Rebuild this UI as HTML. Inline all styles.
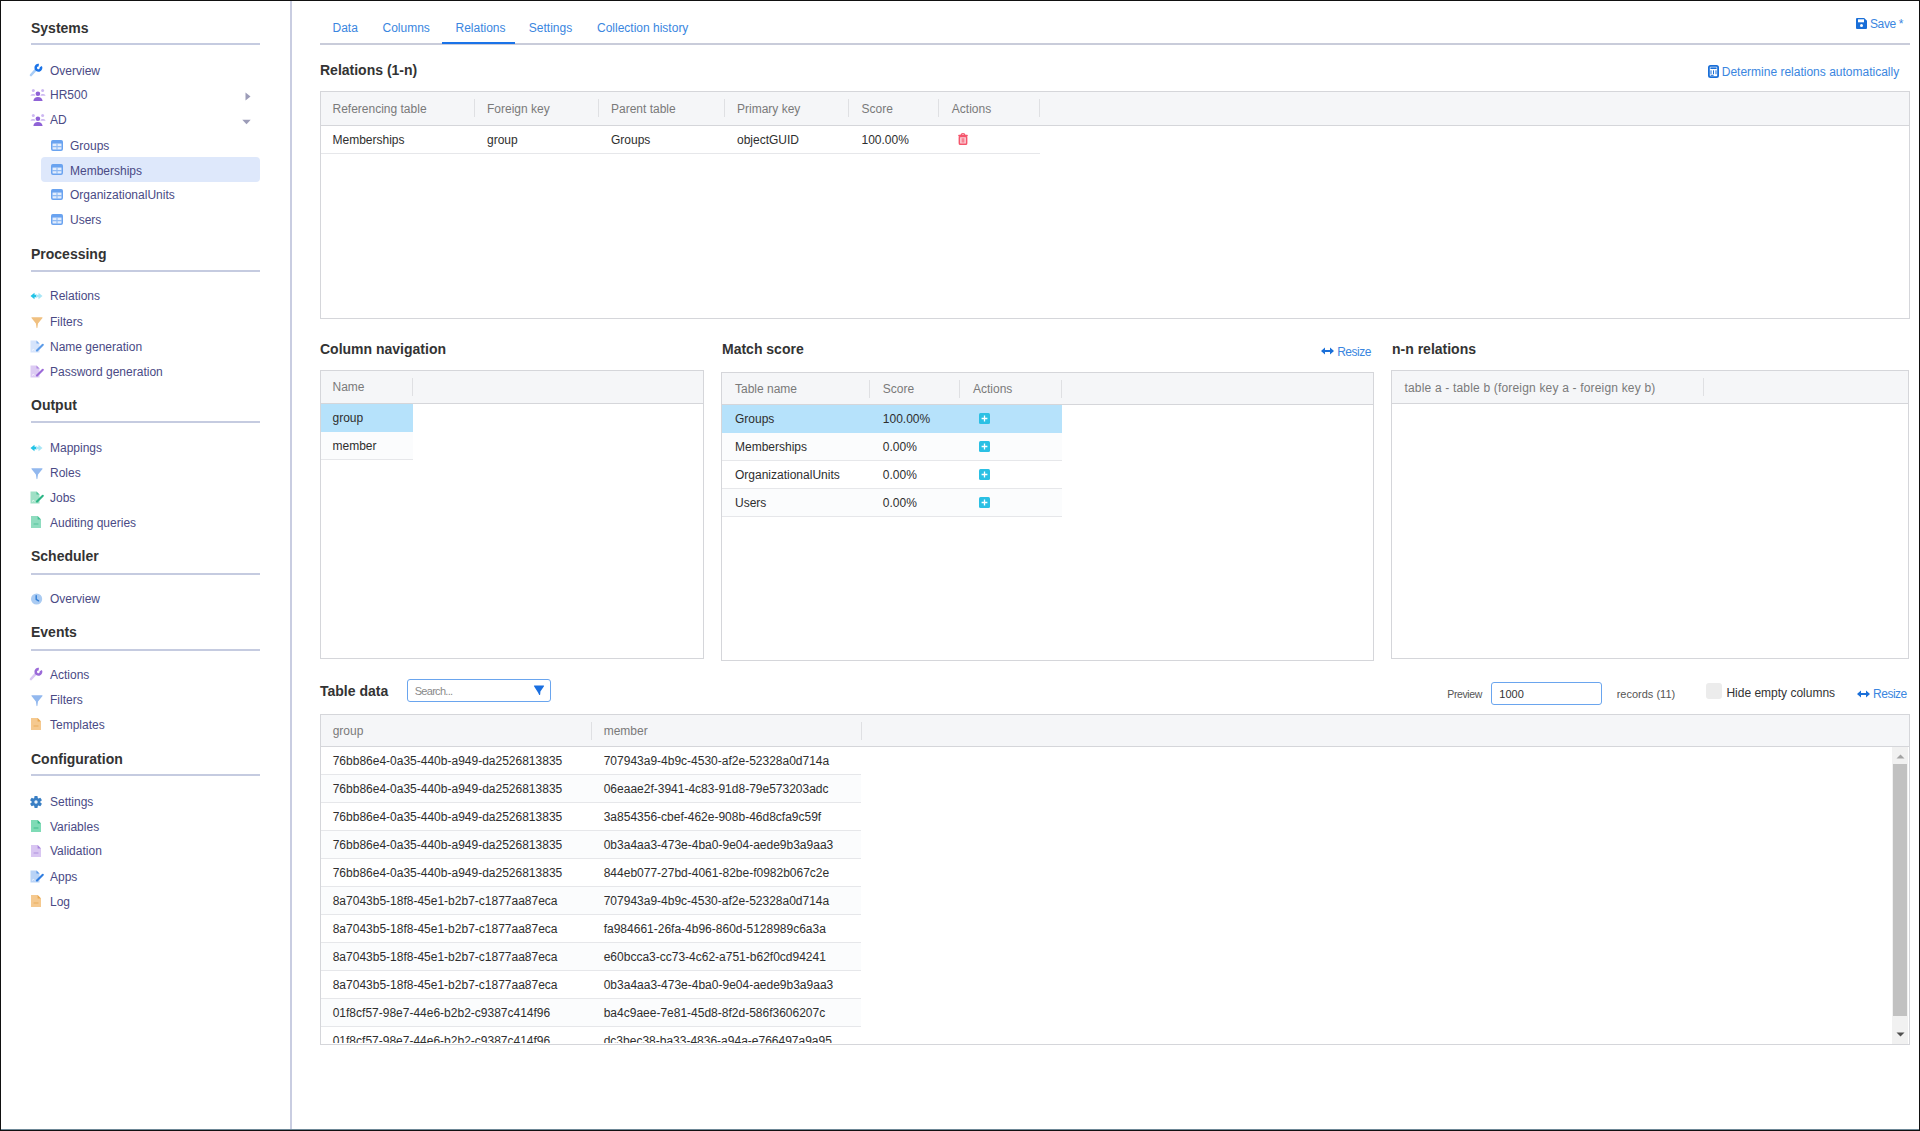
<!DOCTYPE html>
<html><head><meta charset="utf-8"><title>Relations</title>
<style>
html,body{margin:0;padding:0;background:#fff;width:1920px;height:1131px;overflow:hidden;}
body{position:relative;font-family:"Liberation Sans", sans-serif;}
.t{position:absolute;white-space:nowrap;}
.r{position:absolute;}
</style></head><body>
<div class="r" style="left:0px;top:0px;width:1920px;height:1px;background:#111;"></div>
<div class="r" style="left:0px;top:0px;width:1px;height:1131px;background:#111;"></div>
<div class="r" style="left:1919px;top:0px;width:1px;height:1131px;background:#111;"></div>
<div class="r" style="left:0px;top:1130px;width:1920px;height:1px;background:#111;"></div>
<div class="r" style="left:290px;top:1px;width:2px;height:1128px;background:#c9cde1;"></div>
<div class="r" style="left:1px;top:1129px;width:1918px;height:1px;background:#6d8796;"></div>
<div class="t" style="left:31.00px;top:19px;font-size:14px;line-height:18px;color:#333333;font-weight:bold;">Systems</div>
<div class="r" style="left:31px;top:43px;width:229px;height:2px;background:#c5cbe0;"></div>
<div class="t" style="left:50.00px;top:64px;font-size:12px;line-height:15px;color:#4a4a85;">Overview</div>
<svg class="r" style="left:29px;top:62px" width="15" height="15" viewBox="0 0 15 15"><path d="M2 13 L6.9 7.6" stroke="#a9cdf6" stroke-width="2.6" stroke-linecap="round"/><path d="M9.78 3.13 A2.7 2.7 0 1 0 11.78 4.53" stroke="#1a73e8" stroke-width="2.6" fill="none"/></svg>
<div class="t" style="left:50.00px;top:88px;font-size:12px;line-height:15px;color:#4a4a85;">HR500</div>
<svg class="r" style="left:30px;top:88px" width="16" height="14" viewBox="0 0 16 14"><circle cx="7.9" cy="5.8" r="2.3" fill="#8f62d6"/><path d="M3.4 13 Q3.8 9 7.9 9 Q12 9 12.6 13 Z" fill="#8f62d6"/><circle cx="3.3" cy="2.6" r="1.5" fill="#cdb8f2"/><circle cx="12.6" cy="2.6" r="1.5" fill="#cdb8f2"/><path d="M0.4 7.7 Q0.9 5.9 2.6 5.9 H4 Q5.2 5.9 5.4 7.7 Z" fill="#cdb8f2"/><path d="M10.4 7.7 Q10.7 5.9 12 5.9 H13.4 Q15.1 5.9 15.6 7.7 Z" fill="#cdb8f2"/></svg>
<svg class="r" style="left:245px;top:92px" width="6" height="9" viewBox="0 0 6 9"><path d="M0.5 0.5 L5.5 4.5 L0.5 8.5 Z" fill="#9c9cb8"/></svg>
<div class="t" style="left:50.00px;top:113px;font-size:12px;line-height:15px;color:#4a4a85;">AD</div>
<svg class="r" style="left:30px;top:113px" width="16" height="14" viewBox="0 0 16 14"><circle cx="7.9" cy="5.8" r="2.3" fill="#8f62d6"/><path d="M3.4 13 Q3.8 9 7.9 9 Q12 9 12.6 13 Z" fill="#8f62d6"/><circle cx="3.3" cy="2.6" r="1.5" fill="#cdb8f2"/><circle cx="12.6" cy="2.6" r="1.5" fill="#cdb8f2"/><path d="M0.4 7.7 Q0.9 5.9 2.6 5.9 H4 Q5.2 5.9 5.4 7.7 Z" fill="#cdb8f2"/><path d="M10.4 7.7 Q10.7 5.9 12 5.9 H13.4 Q15.1 5.9 15.6 7.7 Z" fill="#cdb8f2"/></svg>
<svg class="r" style="left:242px;top:119px" width="9" height="6" viewBox="0 0 9 6"><path d="M0.3 0.8 H8.7 L4.5 5.2 Z" fill="#9c9cb8"/></svg>
<div class="r" style="left:41px;top:157px;width:219px;height:25px;background:#dee8fb;border-radius:4px;"></div>
<div class="t" style="left:70.00px;top:139px;font-size:12px;line-height:15px;color:#4a4a85;">Groups</div>
<svg class="r" style="left:51px;top:140px" width="12" height="11" viewBox="0 0 12 11"><rect x="0.75" y="0.75" width="10.5" height="9.5" rx="1.2" fill="#e3edfd" stroke="#6aa3f0" stroke-width="1.5"/><rect x="0.75" y="0.75" width="10.5" height="2.8" fill="#6aa3f0"/><path d="M1 6.6 H11 M6 3.4 V10" stroke="#8fbaf3" stroke-width="1.1"/></svg>
<div class="t" style="left:70.00px;top:164px;font-size:12px;line-height:15px;color:#4a4a85;">Memberships</div>
<svg class="r" style="left:51px;top:164px" width="12" height="11" viewBox="0 0 12 11"><rect x="0.75" y="0.75" width="10.5" height="9.5" rx="1.2" fill="#e3edfd" stroke="#6aa3f0" stroke-width="1.5"/><rect x="0.75" y="0.75" width="10.5" height="2.8" fill="#6aa3f0"/><path d="M1 6.6 H11 M6 3.4 V10" stroke="#8fbaf3" stroke-width="1.1"/></svg>
<div class="t" style="left:70.00px;top:188px;font-size:12px;line-height:15px;color:#4a4a85;">OrganizationalUnits</div>
<svg class="r" style="left:51px;top:189px" width="12" height="11" viewBox="0 0 12 11"><rect x="0.75" y="0.75" width="10.5" height="9.5" rx="1.2" fill="#e3edfd" stroke="#6aa3f0" stroke-width="1.5"/><rect x="0.75" y="0.75" width="10.5" height="2.8" fill="#6aa3f0"/><path d="M1 6.6 H11 M6 3.4 V10" stroke="#8fbaf3" stroke-width="1.1"/></svg>
<div class="t" style="left:70.00px;top:213px;font-size:12px;line-height:15px;color:#4a4a85;">Users</div>
<svg class="r" style="left:51px;top:214px" width="12" height="11" viewBox="0 0 12 11"><rect x="0.75" y="0.75" width="10.5" height="9.5" rx="1.2" fill="#e3edfd" stroke="#6aa3f0" stroke-width="1.5"/><rect x="0.75" y="0.75" width="10.5" height="2.8" fill="#6aa3f0"/><path d="M1 6.6 H11 M6 3.4 V10" stroke="#8fbaf3" stroke-width="1.1"/></svg>
<div class="t" style="left:31.00px;top:245px;font-size:14px;line-height:18px;color:#333333;font-weight:bold;">Processing</div>
<div class="r" style="left:31px;top:270px;width:229px;height:2px;background:#c5cbe0;"></div>
<div class="t" style="left:50.00px;top:289px;font-size:12px;line-height:15px;color:#4a4a85;">Relations</div>
<svg class="r" style="left:30px;top:292px" width="13" height="8" viewBox="0 0 13 8"><path d="M0.5 4 L4.5 0.8 V2.8 H7 V5.2 H4.5 V7.2 Z" fill="#22c3e6"/><path d="M12.5 4 L8.5 0.8 V7.2 Z" fill="#a8e6f6"/><rect x="6" y="2.8" width="3" height="2.4" fill="#a8e6f6"/></svg>
<div class="t" style="left:50.00px;top:315px;font-size:12px;line-height:15px;color:#4a4a85;">Filters</div>
<svg class="r" style="left:31px;top:317px" width="12" height="12" viewBox="0 0 12 12"><path d="M0.3 0.8 Q0.3 0.3 0.9 0.3 H11.1 Q11.7 0.3 11.5 0.9 L7 6.6 L6.4 10.8 Q6 11.6 5.5 10.8 L4.9 6.6 Z" fill="#f0c080"/></svg>
<div class="t" style="left:50.00px;top:340px;font-size:12px;line-height:15px;color:#4a4a85;">Name generation</div>
<svg class="r" style="left:30px;top:340px" width="15" height="13" viewBox="0 0 15 13"><path d="M0.5 0.5 H6.5 L9.5 3.5 V12.5 H0.5 Z" fill="#d6e4fb"/><path d="M6.5 0.5 L9.5 3.5 H6.5 Z" fill="#5b9be8" opacity="0.7"/><path d="M2 10.5 Q3.2 8.6 4.6 10.2" stroke="#fff" stroke-width="1" fill="none" opacity="0.8"/><path d="M7 10.6 L12.8 4.8" stroke="#5b9be8" stroke-width="2.1" stroke-linecap="round"/></svg>
<div class="t" style="left:50.00px;top:365px;font-size:12px;line-height:15px;color:#4a4a85;">Password generation</div>
<svg class="r" style="left:30px;top:365px" width="15" height="13" viewBox="0 0 15 13"><path d="M0.5 0.5 H6.5 L9.5 3.5 V12.5 H0.5 Z" fill="#dccbf3"/><path d="M6.5 0.5 L9.5 3.5 H6.5 Z" fill="#9b6ad8" opacity="0.7"/><path d="M2 10.5 Q3.2 8.6 4.6 10.2" stroke="#fff" stroke-width="1" fill="none" opacity="0.8"/><path d="M7 10.6 L12.8 4.8" stroke="#9b6ad8" stroke-width="2.1" stroke-linecap="round"/></svg>
<div class="t" style="left:31.00px;top:396px;font-size:14px;line-height:18px;color:#333333;font-weight:bold;">Output</div>
<div class="r" style="left:31px;top:421px;width:229px;height:2px;background:#c5cbe0;"></div>
<div class="t" style="left:50.00px;top:441px;font-size:12px;line-height:15px;color:#4a4a85;">Mappings</div>
<svg class="r" style="left:30px;top:443.5px" width="13" height="8" viewBox="0 0 13 8"><path d="M0.5 4 L4.5 0.8 V2.8 H7 V5.2 H4.5 V7.2 Z" fill="#22c3e6"/><path d="M12.5 4 L8.5 0.8 V7.2 Z" fill="#a8e6f6"/><rect x="6" y="2.8" width="3" height="2.4" fill="#a8e6f6"/></svg>
<div class="t" style="left:50.00px;top:466px;font-size:12px;line-height:15px;color:#4a4a85;">Roles</div>
<svg class="r" style="left:31px;top:467.5px" width="12" height="12" viewBox="0 0 12 12"><path d="M0.3 0.8 Q0.3 0.3 0.9 0.3 H11.1 Q11.7 0.3 11.5 0.9 L7 6.6 L6.4 10.8 Q6 11.6 5.5 10.8 L4.9 6.6 Z" fill="#92b8ee"/></svg>
<div class="t" style="left:50.00px;top:491px;font-size:12px;line-height:15px;color:#4a4a85;">Jobs</div>
<svg class="r" style="left:30px;top:490.5px" width="15" height="13" viewBox="0 0 15 13"><path d="M0.5 0.5 H6.5 L9.5 3.5 V12.5 H0.5 Z" fill="#9fe0c6"/><path d="M6.5 0.5 L9.5 3.5 H6.5 Z" fill="#2bb585" opacity="0.7"/><path d="M2 10.5 Q3.2 8.6 4.6 10.2" stroke="#fff" stroke-width="1" fill="none" opacity="0.8"/><path d="M7 10.6 L12.8 4.8" stroke="#2bb585" stroke-width="2.1" stroke-linecap="round"/></svg>
<div class="t" style="left:50.00px;top:516px;font-size:12px;line-height:15px;color:#4a4a85;">Auditing queries</div>
<svg class="r" style="left:31px;top:515.5px" width="10" height="12" viewBox="0 0 10 12"><path d="M0 0 H6.6 L10 3.4 V12 H0 Z" fill="#8fdcbf"/><path d="M6.6 0 L10 3.4 H6.6 Z" fill="#45c095"/><rect x="2.6" y="7.2" width="4.8" height="1.6" fill="#45c095" opacity="0.5"/></svg>
<div class="t" style="left:31.00px;top:547px;font-size:14px;line-height:18px;color:#333333;font-weight:bold;">Scheduler</div>
<div class="r" style="left:31px;top:573px;width:229px;height:2px;background:#c5cbe0;"></div>
<div class="t" style="left:50.00px;top:592px;font-size:12px;line-height:15px;color:#4a4a85;">Overview</div>
<svg class="r" style="left:31px;top:593px" width="12" height="12" viewBox="0 0 12 12"><circle cx="5.6" cy="6" r="5.6" fill="#aacbf2"/><path d="M5.2 2.6 V6.4 L7.6 7.8" stroke="#2f7dd6" stroke-width="1.4" fill="none" stroke-linecap="round" stroke-linejoin="round"/></svg>
<div class="t" style="left:31.00px;top:623px;font-size:14px;line-height:18px;color:#333333;font-weight:bold;">Events</div>
<div class="r" style="left:31px;top:649px;width:229px;height:2px;background:#c5cbe0;"></div>
<div class="t" style="left:50.00px;top:668px;font-size:12px;line-height:15px;color:#4a4a85;">Actions</div>
<svg class="r" style="left:29px;top:666px" width="15" height="15" viewBox="0 0 15 15"><path d="M2 13 L6.9 7.6" stroke="#d8c6f2" stroke-width="2.6" stroke-linecap="round"/><path d="M9.78 3.13 A2.7 2.7 0 1 0 11.78 4.53" stroke="#9b6ad8" stroke-width="2.6" fill="none"/></svg>
<div class="t" style="left:50.00px;top:693px;font-size:12px;line-height:15px;color:#4a4a85;">Filters</div>
<svg class="r" style="left:31px;top:694.5px" width="12" height="12" viewBox="0 0 12 12"><path d="M0.3 0.8 Q0.3 0.3 0.9 0.3 H11.1 Q11.7 0.3 11.5 0.9 L7 6.6 L6.4 10.8 Q6 11.6 5.5 10.8 L4.9 6.6 Z" fill="#92b8ee"/></svg>
<div class="t" style="left:50.00px;top:718px;font-size:12px;line-height:15px;color:#4a4a85;">Templates</div>
<svg class="r" style="left:31px;top:717.5px" width="10" height="12" viewBox="0 0 10 12"><path d="M0 0 H6.6 L10 3.4 V12 H0 Z" fill="#f5c98f"/><path d="M6.6 0 L10 3.4 H6.6 Z" fill="#e8a850"/><rect x="2.6" y="7.2" width="4.8" height="1.6" fill="#e8a850" opacity="0.5"/></svg>
<div class="t" style="left:31.00px;top:750px;font-size:14px;line-height:18px;color:#333333;font-weight:bold;">Configuration</div>
<div class="r" style="left:31px;top:774px;width:229px;height:2px;background:#c5cbe0;"></div>
<div class="t" style="left:50.00px;top:795px;font-size:12px;line-height:15px;color:#4a4a85;">Settings</div>
<svg class="r" style="left:30px;top:796px" width="12" height="12" viewBox="0 0 12 12"><g fill="#3a7fc4"><rect x="4.3" y="0" width="3.4" height="3.2" rx="0.8" transform="rotate(0 6 6)"/><rect x="4.3" y="0" width="3.4" height="3.2" rx="0.8" transform="rotate(60 6 6)"/><rect x="4.3" y="0" width="3.4" height="3.2" rx="0.8" transform="rotate(120 6 6)"/><rect x="4.3" y="0" width="3.4" height="3.2" rx="0.8" transform="rotate(180 6 6)"/><rect x="4.3" y="0" width="3.4" height="3.2" rx="0.8" transform="rotate(240 6 6)"/><rect x="4.3" y="0" width="3.4" height="3.2" rx="0.8" transform="rotate(300 6 6)"/><circle cx="6" cy="6" r="4.3"/></g><circle cx="6" cy="6" r="1.7" fill="#eaf2fb"/></svg>
<div class="t" style="left:50.00px;top:820px;font-size:12px;line-height:15px;color:#4a4a85;">Variables</div>
<svg class="r" style="left:31px;top:819.5px" width="10" height="12" viewBox="0 0 10 12"><path d="M0 0 H6.6 L10 3.4 V12 H0 Z" fill="#7fdbb6"/><path d="M6.6 0 L10 3.4 H6.6 Z" fill="#35b886"/><rect x="2.6" y="7.2" width="4.8" height="1.6" fill="#35b886" opacity="0.5"/></svg>
<div class="t" style="left:50.00px;top:844px;font-size:12px;line-height:15px;color:#4a4a85;">Validation</div>
<svg class="r" style="left:31px;top:844.5px" width="10" height="12" viewBox="0 0 10 12"><path d="M0 0 H6.6 L10 3.4 V12 H0 Z" fill="#d9c6f2"/><path d="M6.6 0 L10 3.4 H6.6 Z" fill="#a884dc"/><rect x="2.6" y="7.2" width="4.8" height="1.6" fill="#a884dc" opacity="0.5"/></svg>
<div class="t" style="left:50.00px;top:870px;font-size:12px;line-height:15px;color:#4a4a85;">Apps</div>
<svg class="r" style="left:30px;top:870px" width="15" height="13" viewBox="0 0 15 13"><path d="M0.5 0.5 H6.5 L9.5 3.5 V12.5 H0.5 Z" fill="#b9d3f6"/><path d="M6.5 0.5 L9.5 3.5 H6.5 Z" fill="#2f7de0" opacity="0.7"/><path d="M2 10.5 Q3.2 8.6 4.6 10.2" stroke="#fff" stroke-width="1" fill="none" opacity="0.8"/><path d="M7 10.6 L12.8 4.8" stroke="#2f7de0" stroke-width="2.1" stroke-linecap="round"/></svg>
<div class="t" style="left:50.00px;top:895px;font-size:12px;line-height:15px;color:#4a4a85;">Log</div>
<svg class="r" style="left:31px;top:895px" width="10" height="12" viewBox="0 0 10 12"><path d="M0 0 H6.6 L10 3.4 V12 H0 Z" fill="#f5c98f"/><path d="M6.6 0 L10 3.4 H6.6 Z" fill="#e8a850"/><rect x="2.6" y="7.2" width="4.8" height="1.6" fill="#e8a850" opacity="0.5"/></svg>
<div class="t" style="left:332.50px;top:21px;font-size:12px;line-height:15px;color:#3a86e0;">Data</div>
<div class="t" style="left:382.50px;top:21px;font-size:12px;line-height:15px;color:#3a86e0;">Columns</div>
<div class="t" style="left:455.50px;top:21px;font-size:12px;line-height:15px;color:#3a86e0;">Relations</div>
<div class="t" style="left:528.80px;top:21px;font-size:12px;line-height:15px;color:#3a86e0;">Settings</div>
<div class="t" style="left:597.00px;top:21px;font-size:12px;line-height:15px;color:#3a86e0;">Collection history</div>
<div class="r" style="left:320px;top:43px;width:1590px;height:2px;background:#c9ccda;"></div>
<div class="r" style="left:442px;top:42px;width:73px;height:2px;background:#1a73e8;"></div>
<svg class="r" style="left:1856px;top:18px" width="11" height="11" viewBox="0 0 11 11"><path d="M0 1 Q0 0 1 0 H8.2 L11 2.8 V10 Q11 11 10 11 H1 Q0 11 0 10 Z" fill="#1a6fd8"/><rect x="2" y="1.3" width="6" height="3" fill="#fff"/><circle cx="5.5" cy="7.4" r="1.5" fill="#fff"/></svg>
<div class="t" style="left:1870.00px;top:17px;font-size:12px;line-height:15px;color:#3a86e0;letter-spacing:-0.4px;">Save *</div>
<div class="t" style="left:320.00px;top:61px;font-size:14px;line-height:18px;color:#333333;font-weight:bold;">Relations (1-n)</div>
<svg class="r" style="left:1708px;top:65px" width="11" height="13" viewBox="0 0 11 13"><rect x="0.9" y="0.9" width="9.2" height="11.2" rx="1.6" fill="none" stroke="#1a6fd8" stroke-width="1.8"/><rect x="2.4" y="2.4" width="6.2" height="1.6" fill="#1a6fd8"/><path d="M3 5.3 V9.2 M5.5 5.3 V9.2 M8 5.3 V9.2" stroke="#1a6fd8" stroke-width="1"/><rect x="2.6" y="9.8" width="3" height="1" fill="#1a6fd8"/></svg>
<div class="t" style="left:1721.75px;top:65px;font-size:12px;line-height:15px;color:#3a86e0;">Determine relations automatically</div>
<div class="r" style="left:320px;top:91px;width:1590px;height:228px;border:1px solid #d5d6da;box-sizing:border-box;"></div>
<div class="r" style="left:321px;top:92px;width:1588px;height:33px;background:#f5f6f8;"></div>
<div class="r" style="left:321px;top:125px;width:1588px;height:1px;background:#d5d6da;"></div>
<div class="t" style="left:332.50px;top:102px;font-size:12px;line-height:15px;color:#7a7a7a;">Referencing table</div>
<div class="t" style="left:487.00px;top:102px;font-size:12px;line-height:15px;color:#7a7a7a;">Foreign key</div>
<div class="t" style="left:611.00px;top:102px;font-size:12px;line-height:15px;color:#7a7a7a;">Parent table</div>
<div class="t" style="left:737.00px;top:102px;font-size:12px;line-height:15px;color:#7a7a7a;">Primary key</div>
<div class="t" style="left:861.50px;top:102px;font-size:12px;line-height:15px;color:#7a7a7a;">Score</div>
<div class="t" style="left:951.80px;top:102px;font-size:12px;line-height:15px;color:#7a7a7a;">Actions</div>
<div class="r" style="left:474px;top:99px;width:1px;height:18px;background:#dfe0e3;"></div>
<div class="r" style="left:598px;top:99px;width:1px;height:18px;background:#dfe0e3;"></div>
<div class="r" style="left:724px;top:99px;width:1px;height:18px;background:#dfe0e3;"></div>
<div class="r" style="left:848px;top:99px;width:1px;height:18px;background:#dfe0e3;"></div>
<div class="r" style="left:938px;top:99px;width:1px;height:18px;background:#dfe0e3;"></div>
<div class="r" style="left:1039px;top:99px;width:1px;height:18px;background:#dfe0e3;"></div>
<div class="r" style="left:321px;top:153px;width:719px;height:1px;background:#e6e7ea;"></div>
<div class="t" style="left:332.50px;top:133px;font-size:12px;line-height:15px;color:#2e2e2e;">Memberships</div>
<div class="t" style="left:487.00px;top:133px;font-size:12px;line-height:15px;color:#2e2e2e;">group</div>
<div class="t" style="left:611.00px;top:133px;font-size:12px;line-height:15px;color:#2e2e2e;">Groups</div>
<div class="t" style="left:737.00px;top:133px;font-size:12px;line-height:15px;color:#2e2e2e;">objectGUID</div>
<div class="t" style="left:861.50px;top:133px;font-size:12px;line-height:15px;color:#2e2e2e;">100.00%</div>
<svg class="r" style="left:958px;top:133px" width="10" height="12" viewBox="0 0 10 12"><path d="M3.2 2.2 Q3.2 0.7 5 0.7 Q6.8 0.7 6.8 2.2" stroke="#f4566c" stroke-width="1.3" fill="none"/><rect x="0.2" y="1.8" width="9.6" height="1.7" rx="0.7" fill="#f4566c"/><rect x="1.35" y="3.6" width="7.3" height="7.7" rx="1" fill="#fcd0d7" stroke="#f4566c" stroke-width="1.5"/><path d="M4.2 5.2 V9.6 M5.8 5.2 V9.6" stroke="#f4566c" stroke-width="0.9"/></svg>
<div class="t" style="left:320.00px;top:340px;font-size:14px;line-height:18px;color:#333333;font-weight:bold;">Column navigation</div>
<div class="r" style="left:320px;top:370px;width:384px;height:289px;border:1px solid #d5d6da;box-sizing:border-box;"></div>
<div class="r" style="left:321px;top:371px;width:382px;height:32px;background:#f5f6f8;"></div>
<div class="r" style="left:321px;top:403px;width:382px;height:1px;background:#d5d6da;"></div>
<div class="t" style="left:332.50px;top:380px;font-size:12px;line-height:15px;color:#7a7a7a;">Name</div>
<div class="r" style="left:412px;top:378px;width:1px;height:18px;background:#dfe0e3;"></div>
<div class="r" style="left:321px;top:404px;width:92px;height:28px;background:#b6e2fb;"></div>
<div class="t" style="left:332.50px;top:411px;font-size:12px;line-height:15px;color:#2e2e2e;">group</div>
<div class="r" style="left:321px;top:432px;width:92px;height:27px;background:#fbfcfd;"></div>
<div class="t" style="left:332.50px;top:439px;font-size:12px;line-height:15px;color:#2e2e2e;">member</div>
<div class="r" style="left:321px;top:459px;width:92px;height:1px;background:#e6e7ea;"></div>
<div class="t" style="left:722.00px;top:340px;font-size:14px;line-height:18px;color:#333333;font-weight:bold;">Match score</div>
<svg class="r" style="left:1321px;top:347px" width="13" height="8" viewBox="0 0 13 8"><path d="M0 4 L4 0.5 V2.9 H9 V0.5 L13 4 L9 7.5 V5.1 H4 V7.5 Z" fill="#1a6fd8"/></svg>
<div class="t" style="left:1337.20px;top:345px;font-size:12px;line-height:15px;color:#3a86e0;letter-spacing:-0.5px;">Resize</div>
<div class="r" style="left:721px;top:372px;width:653px;height:289px;border:1px solid #d5d6da;box-sizing:border-box;"></div>
<div class="r" style="left:722px;top:373px;width:651px;height:31px;background:#f5f6f8;"></div>
<div class="r" style="left:722px;top:404px;width:651px;height:1px;background:#d5d6da;"></div>
<div class="t" style="left:735.00px;top:382px;font-size:12px;line-height:15px;color:#7a7a7a;">Table name</div>
<div class="t" style="left:882.80px;top:382px;font-size:12px;line-height:15px;color:#7a7a7a;">Score</div>
<div class="t" style="left:973.00px;top:382px;font-size:12px;line-height:15px;color:#7a7a7a;">Actions</div>
<div class="r" style="left:869px;top:380px;width:1px;height:18px;background:#dfe0e3;"></div>
<div class="r" style="left:959px;top:380px;width:1px;height:18px;background:#dfe0e3;"></div>
<div class="r" style="left:1061px;top:380px;width:1px;height:18px;background:#dfe0e3;"></div>
<div class="r" style="left:722px;top:405px;width:340px;height:28px;background:#b6e2fb;"></div>
<div class="t" style="left:735.00px;top:412px;font-size:12px;line-height:15px;color:#2e2e2e;">Groups</div>
<div class="t" style="left:882.80px;top:412px;font-size:12px;line-height:15px;color:#2e2e2e;">100.00%</div>
<svg class="r" style="left:979px;top:413px" width="11" height="11" viewBox="0 0 11 11"><rect width="11" height="11" rx="1.5" fill="#2bc0e4"/><path d="M5.5 2.6 V8.4 M2.6 5.5 H8.4" stroke="#fff" stroke-width="1.3"/></svg>
<div class="r" style="left:722px;top:433px;width:340px;height:27px;background:#fbfcfd;"></div>
<div class="r" style="left:722px;top:460px;width:340px;height:1px;background:#e6e7ea;"></div>
<div class="t" style="left:735.00px;top:440px;font-size:12px;line-height:15px;color:#2e2e2e;">Memberships</div>
<div class="t" style="left:882.80px;top:440px;font-size:12px;line-height:15px;color:#2e2e2e;">0.00%</div>
<svg class="r" style="left:979px;top:441px" width="11" height="11" viewBox="0 0 11 11"><rect width="11" height="11" rx="1.5" fill="#2bc0e4"/><path d="M5.5 2.6 V8.4 M2.6 5.5 H8.4" stroke="#fff" stroke-width="1.3"/></svg>
<div class="r" style="left:722px;top:488px;width:340px;height:1px;background:#e6e7ea;"></div>
<div class="t" style="left:735.00px;top:468px;font-size:12px;line-height:15px;color:#2e2e2e;">OrganizationalUnits</div>
<div class="t" style="left:882.80px;top:468px;font-size:12px;line-height:15px;color:#2e2e2e;">0.00%</div>
<svg class="r" style="left:979px;top:469px" width="11" height="11" viewBox="0 0 11 11"><rect width="11" height="11" rx="1.5" fill="#2bc0e4"/><path d="M5.5 2.6 V8.4 M2.6 5.5 H8.4" stroke="#fff" stroke-width="1.3"/></svg>
<div class="r" style="left:722px;top:489px;width:340px;height:27px;background:#fbfcfd;"></div>
<div class="r" style="left:722px;top:516px;width:340px;height:1px;background:#e6e7ea;"></div>
<div class="t" style="left:735.00px;top:496px;font-size:12px;line-height:15px;color:#2e2e2e;">Users</div>
<div class="t" style="left:882.80px;top:496px;font-size:12px;line-height:15px;color:#2e2e2e;">0.00%</div>
<svg class="r" style="left:979px;top:497px" width="11" height="11" viewBox="0 0 11 11"><rect width="11" height="11" rx="1.5" fill="#2bc0e4"/><path d="M5.5 2.6 V8.4 M2.6 5.5 H8.4" stroke="#fff" stroke-width="1.3"/></svg>
<div class="t" style="left:1392.00px;top:340px;font-size:14px;line-height:18px;color:#333333;font-weight:bold;">n-n relations</div>
<div class="r" style="left:1391px;top:370px;width:518px;height:289px;border:1px solid #d5d6da;box-sizing:border-box;"></div>
<div class="r" style="left:1392px;top:371px;width:516px;height:32px;background:#f5f6f8;"></div>
<div class="r" style="left:1392px;top:403px;width:516px;height:1px;background:#d5d6da;"></div>
<div class="t" style="left:1404.50px;top:381px;font-size:12px;line-height:15px;color:#7a7a7a;letter-spacing:0.18px;">table a - table b (foreign key a - foreign key b)</div>
<div class="r" style="left:1703px;top:378px;width:1px;height:18px;background:#dfe0e3;"></div>
<div class="t" style="left:320.00px;top:682px;font-size:14px;line-height:18px;color:#333333;font-weight:bold;">Table data</div>
<div class="r" style="left:407px;top:679px;width:144px;height:23px;background:#fff;border:1px solid #6aa5ee;border-radius:3px;box-sizing:border-box;"></div>
<div class="t" style="left:414.70px;top:684px;font-size:11px;line-height:14px;color:#8a8a8a;letter-spacing:-0.7px;">Search...</div>
<svg class="r" style="left:533px;top:685px" width="12" height="11" viewBox="0 0 12 11"><path d="M1 1.2 Q0.6 0.6 1.4 0.6 H10.6 Q11.4 0.6 11 1.2 L7.4 6.6 L7.2 9.6 Q6.6 10.6 6 9.6 L5 7.6 Z" fill="#1a6fe0"/></svg>
<div class="t" style="left:1447.30px;top:688px;font-size:10.5px;line-height:13px;color:#555;letter-spacing:-0.4px;">Preview</div>
<div class="r" style="left:1491px;top:682px;width:111px;height:23px;background:#fff;border:1px solid #6aa5ee;border-radius:3px;box-sizing:border-box;"></div>
<div class="t" style="left:1499.30px;top:687px;font-size:11px;line-height:14px;color:#333;">1000</div>
<div class="t" style="left:1616.70px;top:687px;font-size:11px;line-height:14px;color:#555;">records (11)</div>
<div class="r" style="left:1706px;top:683px;width:16px;height:16px;background:#ececec;border-radius:3px;"></div>
<div class="t" style="left:1726.40px;top:686px;font-size:12px;line-height:15px;color:#333;">Hide empty columns</div>
<svg class="r" style="left:1857px;top:690px" width="13" height="8" viewBox="0 0 13 8"><path d="M0 4 L4 0.5 V2.9 H9 V0.5 L13 4 L9 7.5 V5.1 H4 V7.5 Z" fill="#1a6fd8"/></svg>
<div class="t" style="left:1873.10px;top:687px;font-size:12px;line-height:15px;color:#3a86e0;letter-spacing:-0.5px;">Resize</div>
<div class="r" style="left:320px;top:714px;width:1590px;height:331px;border:1px solid #d5d6da;box-sizing:border-box;"></div>
<div class="r" style="left:321px;top:715px;width:1588px;height:31px;background:#f5f6f8;"></div>
<div class="r" style="left:321px;top:746px;width:1588px;height:1px;background:#d5d6da;"></div>
<div class="t" style="left:332.70px;top:724px;font-size:12px;line-height:15px;color:#7a7a7a;">group</div>
<div class="t" style="left:603.70px;top:724px;font-size:12px;line-height:15px;color:#7a7a7a;">member</div>
<div class="r" style="left:591px;top:722px;width:1px;height:18px;background:#dfe0e3;"></div>
<div class="r" style="left:861px;top:722px;width:1px;height:18px;background:#dfe0e3;"></div>
<div class="r" style="left:321px;top:747px;width:1571px;height:296px;overflow:hidden;">
<div class="r" style="left:0px;top:27px;width:540px;height:1px;background:#e6e7ea;"></div>
<div class="t" style="left:11.70px;top:7px;font-size:12px;line-height:15px;color:#2e2e2e;">76bb86e4-0a35-440b-a949-da2526813835</div>
<div class="t" style="left:282.70px;top:7px;font-size:12px;line-height:15px;color:#2e2e2e;">707943a9-4b9c-4530-af2e-52328a0d714a</div>
<div class="r" style="left:0px;top:28px;width:540px;height:27px;background:#fbfcfd;"></div>
<div class="r" style="left:0px;top:55px;width:540px;height:1px;background:#e6e7ea;"></div>
<div class="t" style="left:11.70px;top:35px;font-size:12px;line-height:15px;color:#2e2e2e;">76bb86e4-0a35-440b-a949-da2526813835</div>
<div class="t" style="left:282.70px;top:35px;font-size:12px;line-height:15px;color:#2e2e2e;">06eaae2f-3941-4c83-91d8-79e573203adc</div>
<div class="r" style="left:0px;top:83px;width:540px;height:1px;background:#e6e7ea;"></div>
<div class="t" style="left:11.70px;top:63px;font-size:12px;line-height:15px;color:#2e2e2e;">76bb86e4-0a35-440b-a949-da2526813835</div>
<div class="t" style="left:282.70px;top:63px;font-size:12px;line-height:15px;color:#2e2e2e;">3a854356-cbef-462e-908b-46d8cfa9c59f</div>
<div class="r" style="left:0px;top:84px;width:540px;height:27px;background:#fbfcfd;"></div>
<div class="r" style="left:0px;top:111px;width:540px;height:1px;background:#e6e7ea;"></div>
<div class="t" style="left:11.70px;top:91px;font-size:12px;line-height:15px;color:#2e2e2e;">76bb86e4-0a35-440b-a949-da2526813835</div>
<div class="t" style="left:282.70px;top:91px;font-size:12px;line-height:15px;color:#2e2e2e;">0b3a4aa3-473e-4ba0-9e04-aede9b3a9aa3</div>
<div class="r" style="left:0px;top:139px;width:540px;height:1px;background:#e6e7ea;"></div>
<div class="t" style="left:11.70px;top:119px;font-size:12px;line-height:15px;color:#2e2e2e;">76bb86e4-0a35-440b-a949-da2526813835</div>
<div class="t" style="left:282.70px;top:119px;font-size:12px;line-height:15px;color:#2e2e2e;">844eb077-27bd-4061-82be-f0982b067c2e</div>
<div class="r" style="left:0px;top:140px;width:540px;height:27px;background:#fbfcfd;"></div>
<div class="r" style="left:0px;top:167px;width:540px;height:1px;background:#e6e7ea;"></div>
<div class="t" style="left:11.70px;top:147px;font-size:12px;line-height:15px;color:#2e2e2e;">8a7043b5-18f8-45e1-b2b7-c1877aa87eca</div>
<div class="t" style="left:282.70px;top:147px;font-size:12px;line-height:15px;color:#2e2e2e;">707943a9-4b9c-4530-af2e-52328a0d714a</div>
<div class="r" style="left:0px;top:195px;width:540px;height:1px;background:#e6e7ea;"></div>
<div class="t" style="left:11.70px;top:175px;font-size:12px;line-height:15px;color:#2e2e2e;">8a7043b5-18f8-45e1-b2b7-c1877aa87eca</div>
<div class="t" style="left:282.70px;top:175px;font-size:12px;line-height:15px;color:#2e2e2e;">fa984661-26fa-4b96-860d-5128989c6a3a</div>
<div class="r" style="left:0px;top:196px;width:540px;height:27px;background:#fbfcfd;"></div>
<div class="r" style="left:0px;top:223px;width:540px;height:1px;background:#e6e7ea;"></div>
<div class="t" style="left:11.70px;top:203px;font-size:12px;line-height:15px;color:#2e2e2e;">8a7043b5-18f8-45e1-b2b7-c1877aa87eca</div>
<div class="t" style="left:282.70px;top:203px;font-size:12px;line-height:15px;color:#2e2e2e;">e60bcca3-cc73-4c62-a751-b62f0cd94241</div>
<div class="r" style="left:0px;top:251px;width:540px;height:1px;background:#e6e7ea;"></div>
<div class="t" style="left:11.70px;top:231px;font-size:12px;line-height:15px;color:#2e2e2e;">8a7043b5-18f8-45e1-b2b7-c1877aa87eca</div>
<div class="t" style="left:282.70px;top:231px;font-size:12px;line-height:15px;color:#2e2e2e;">0b3a4aa3-473e-4ba0-9e04-aede9b3a9aa3</div>
<div class="r" style="left:0px;top:252px;width:540px;height:27px;background:#fbfcfd;"></div>
<div class="r" style="left:0px;top:279px;width:540px;height:1px;background:#e6e7ea;"></div>
<div class="t" style="left:11.70px;top:259px;font-size:12px;line-height:15px;color:#2e2e2e;">01f8cf57-98e7-44e6-b2b2-c9387c414f96</div>
<div class="t" style="left:282.70px;top:259px;font-size:12px;line-height:15px;color:#2e2e2e;">ba4c9aee-7e81-45d8-8f2d-586f3606207c</div>
<div class="r" style="left:0px;top:307px;width:540px;height:1px;background:#e6e7ea;"></div>
<div class="t" style="left:11.70px;top:287px;font-size:12px;line-height:15px;color:#2e2e2e;">01f8cf57-98e7-44e6-b2b2-c9387c414f96</div>
<div class="t" style="left:282.70px;top:287px;font-size:12px;line-height:15px;color:#2e2e2e;">dc3bec38-ba33-4836-a94a-e766497a9a95</div>
</div>
<div class="r" style="left:1892px;top:747px;width:16px;height:297px;background:#f1f1f1;"></div>
<div class="r" style="left:1893px;top:764px;width:14px;height:252px;background:#c1c1c1;"></div>
<svg class="r" style="left:1896px;top:754px" width="9" height="5" viewBox="0 0 9 5"><path d="M0.5 4.5 L4.5 0.5 L8.5 4.5 Z" fill="#a3a3a3"/></svg>
<svg class="r" style="left:1896px;top:1032px" width="9" height="5" viewBox="0 0 9 5"><path d="M0.5 0.5 L4.5 4.5 L8.5 0.5 Z" fill="#505050"/></svg>
</body></html>
